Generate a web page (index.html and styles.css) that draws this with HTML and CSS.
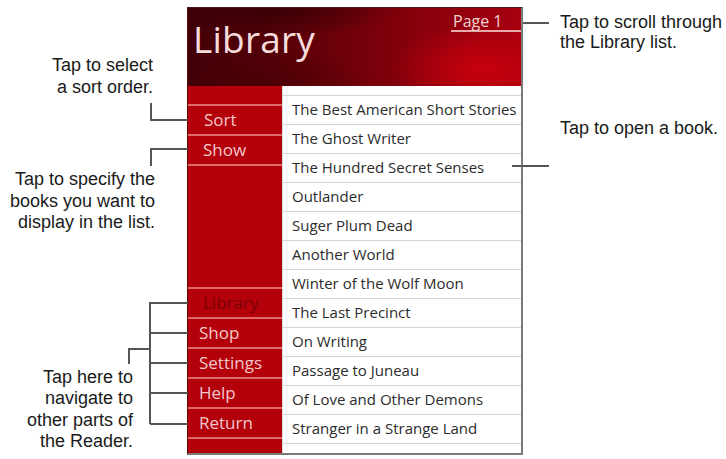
FILE: index.html
```html
<!DOCTYPE html>
<html lang="en">
<head>
<meta charset="utf-8">
<title>Library</title>
<link rel="stylesheet" href="styles.css">
</head>
<body>
<div class="page">
  <div class="reader">
    <header class="reader-head">
      <h1 class="reader-title">Library</h1>
      <a class="page-link">Page 1</a>
    </header>
    <div class="reader-body">
      <nav class="side">
        <div class="side-group side-top">
          <div class="side-item">Sort</div>
          <div class="side-item">Show</div>
        </div>
        <div class="side-group side-bottom">
          <div class="side-item is-current">Library</div>
          <div class="side-item">Shop</div>
          <div class="side-item">Settings</div>
          <div class="side-item">Help</div>
          <div class="side-item">Return</div>
        </div>
      </nav>
      <ul class="books">
        <li>The Best American Short Stories</li>
        <li>The Ghost Writer</li>
        <li>The Hundred Secret Senses</li>
        <li>Outlander</li>
        <li>Suger Plum Dead</li>
        <li>Another World</li>
        <li>Winter of the Wolf Moon</li>
        <li>The Last Precinct</li>
        <li>On Writing</li>
        <li>Passage to Juneau</li>
        <li>Of Love and Other Demons</li>
        <li>Stranger in a Strange Land</li>
      </ul>
    </div>
  </div>

  <svg class="leaders" width="726" height="459" viewBox="0 0 726 459">
    <g fill="none" stroke="#555" stroke-width="2">
      <path d="M523 23 H549"/>
      <path d="M512 166 H549"/>
      <path d="M151 103 V120 H188"/>
      <path d="M151 166 V149 H188"/>
      <path d="M150 302 V424"/>
      <path d="M150 303 H188 M150 333 H188 M150 363 H188 M150 393 H188 M150 424 H188"/>
      <path d="M129 364 V349 H150"/>
    </g>
  </svg>

  <p class="note note-sort">Tap to select<br>a sort order.</p>
  <p class="note note-show">Tap to specify the<br>books you want to<br>display in the list.</p>
  <p class="note note-nav">Tap here to<br>navigate to<br>other parts of<br>the Reader.</p>
  <p class="note note-page">Tap to scroll through<br>the Library list.</p>
  <p class="note note-open">Tap to open a book.</p>
</div>
</body>
</html>
```
FILE: styles.css
```css
html, body {
  margin: 0;
  padding: 0;
  background: #fff;
}

.page {
  position: relative;
  width: 726px;
  height: 459px;
  overflow: hidden;
  padding-top: 7px;
  box-sizing: border-box;
}

/* device screen */
.reader {
  margin-left: 187px;
  width: 336px;
  height: 448px;
  box-sizing: border-box;
  border-top: 1px solid #4a1a1a;
  border-left: 1px solid #5a0a0a;
  border-right: 2px solid #7a7a7a;
  border-bottom: 2px solid #7a7a7a;
  display: flex;
  flex-direction: column;
  font-family: "Open Sans", "Noto Sans", sans-serif;
}

.reader-head {
  height: 78px;
  flex: none;
  display: flex;
  justify-content: space-between;
  align-items: flex-start;
  background:
    radial-gradient(ellipse 90px 45px at 88% 78%, rgba(204, 0, 14, 0.95), rgba(204, 0, 14, 0) 100%),
    radial-gradient(ellipse 130px 30px at 25% 0%, rgba(50, 0, 4, 0.8), rgba(50, 0, 4, 0) 100%),
    radial-gradient(ellipse 120px 40px at 20% 100%, rgba(70, 0, 4, 0.7), rgba(70, 0, 4, 0) 100%),
    linear-gradient(to right, #420008 0%, #5a0008 30%, #7e000b 60%, #a6000f 100%);
}

.reader-title {
  margin: 12px 0 0 5px;
  font-size: 37px;
  line-height: 37px;
  font-weight: 400;
  color: #f6dcdc;
  letter-spacing: 0.2px;
}

.page-link {
  margin-top: 4px;
  width: 68px;
  padding-left: 2px;
  font-size: 16px;
  line-height: 18px;
  color: #f2d2d2;
  border-bottom: 2px solid #e6aaaa;
}

.reader-body {
  flex: 1;
  display: flex;
  min-height: 0;
}

/* red menu column */
.side {
  width: 94px;
  flex: none;
  background: #b3000a;
  display: flex;
  flex-direction: column;
  justify-content: space-between;
}

.side-top {
  padding-top: 18px;
}

.side-bottom {
  padding-bottom: 14px;
}

.side-item {
  height: 30px;
  box-sizing: border-box;
  border-top: 2px solid #e0696c;
  padding-left: 11px;
  font-size: 17px;
  line-height: 27px;
  color: #f4c9c9;
}

.side-group .side-item:last-child {
  height: 32px;
  border-bottom: 2px solid #e0696c;
}

.side-top .side-item:first-child {
  padding-left: 16px;
}

.side-top .side-item:nth-child(2) {
  padding-left: 15px;
}

/* the section currently open is dimmed into the bar */
.side-item.is-current {
  color: #7c0008;
  padding-left: 15px;
}

/* book list */
.books {
  flex: 1;
  margin: 0;
  padding: 9px 0 0 0;
  list-style: none;
  background: #fff;
  border-left: 1px solid #d8d8d8;
}

.books li {
  height: 29px;
  box-sizing: border-box;
  border-top: 1px solid #d4d4d4;
  padding-left: 9px;
  font-size: 15px;
  line-height: 27px;
  color: #2c2c2c;
  white-space: nowrap;
}

.books li:last-child {
  height: 30px;
  border-bottom: 1px solid #d4d4d4;
}

/* callouts around the device */
.leaders {
  position: absolute;
  left: 0;
  top: 0;
}

.note {
  position: absolute;
  margin: 0;
  font-family: "Liberation Sans", Arial, sans-serif;
  font-size: 18px;
  color: #1a1a1a;
  white-space: nowrap;
}

.note-sort {
  right: 573px;
  top: 54px;
  line-height: 22px;
  text-align: right;
}

.note-show {
  right: 571px;
  top: 169px;
  line-height: 21.5px;
  text-align: right;
}

.note-nav {
  right: 593px;
  top: 367px;
  line-height: 21.3px;
  text-align: right;
}

.note-page {
  left: 560px;
  top: 12px;
  line-height: 20px;
}

.note-open {
  left: 560px;
  top: 117px;
  line-height: 22px;
}
```
